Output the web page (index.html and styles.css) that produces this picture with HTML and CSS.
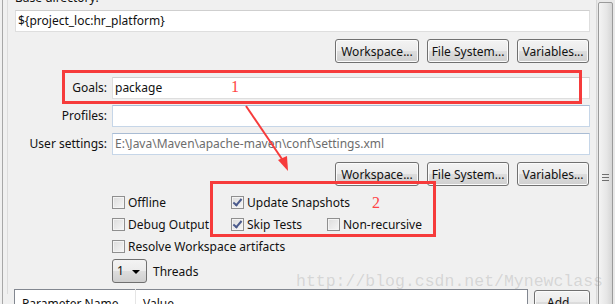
FILE: index.html
```html
<!DOCTYPE html>
<html lang="en">
<head>
  <meta charset="UTF-8" />
  <title>Maven Build Configuration</title>
  <link rel="stylesheet" href="styles.css">
</head>
<body>
  <div class="window">
    <div class="panel">
      <div class="content">
        <div class="base-label">Base directory:</div>
        <div class="field">${project_loc:hr_platform}</div>

        <div class="btn-row">
          <button class="btn btn-ws">Workspace...</button>
          <button class="btn btn-fs">File System...</button>
          <button class="btn btn-var">Variables...</button>
        </div>

        <div class="form">
          <label class="form-label">Goals:</label>
          <div class="field">package</div>
          <label class="form-label">Profiles:</label>
          <div class="field field-blue"></div>
          <label class="form-label">User settings:</label>
          <div class="field field-blue field-muted">E:\Java\Maven\apache-maven\conf\settings.xml</div>
        </div>

        <div class="btn-row">
          <button class="btn btn-ws">Workspace...</button>
          <button class="btn btn-fs">File System...</button>
          <button class="btn btn-var">Variables...</button>
        </div>

        <div class="options">
          <label class="check"><span class="box"></span>Offline</label>
          <label class="check"><span class="box checked"></span>Update Snapshots</label>
          <span></span>
          <label class="check"><span class="box"></span>Debug Output</label>
          <label class="check"><span class="box checked"></span>Skip Tests</label>
          <label class="check"><span class="box"></span>Non-recursive</label>
          <label class="check wide"><span class="box"></span>Resolve Workspace artifacts</label>
        </div>

        <div class="threads">
          <div class="select">1<span class="caret"></span></div>
          <span>Threads</span>
        </div>

        <div class="params">
          <table class="param-table">
            <tr>
              <th class="col-name">Parameter Name</th>
              <th>Value</th>
            </tr>
          </table>
          <button class="btn btn-add">Add...</button>
        </div>
      </div>
    </div>

    <div class="scrollbar">
      <div class="thumb"><span class="grip"></span></div>
    </div>

    <!-- annotations drawn over the dialog -->
    <div class="mark mark-goals"></div>
    <div class="mark mark-flags"></div>
    <span class="note note-1">1</span>
    <span class="note note-2">2</span>
    <svg class="arrow" width="615" height="304" viewBox="0 0 615 304">
      <line x1="246" y1="106" x2="284" y2="162" stroke="#f63b3b" stroke-width="2" />
      <polygon points="288,171 278,160 287,156" fill="#f63b3b" />
    </svg>
    <div class="watermark">http://blog.csdn.net/Mynewclass</div>
  </div>
</body>
</html>
```

FILE: styles.css
```css
body {
  margin: 0;
  background: #f0f0f0;
  font-family: "Noto Sans", sans-serif;
  font-size: 12px;
  color: #111;
}

.window {
  position: relative;
  display: flex;
  width: 615px;
  height: 304px;
  overflow: hidden;
}

.panel {
  width: 593px;
  margin-left: 2px;
  border-left: 1px solid #a7a7a7;
}

.content {
  margin-left: 4px;
  border-left: 1px solid #dcdcdc;
  padding: 0 6px 0 7px;
  height: 100%;
}

.base-label {
  margin-top: -10px;
  height: 16px;
  line-height: 16px;
}

.field {
  box-sizing: border-box;
  height: 22px;
  margin-top: 4px;
  padding: 0 2px;
  line-height: 20px;
  background: #fff;
  border: 1px solid #dedede;
  border-top-color: #cfcfcf;
  white-space: nowrap;
  overflow: hidden;
}

.field-blue {
  border-color: #c6d6e8;
  border-top-color: #a9bcd4;
}

.field-muted {
  color: #6d6d6d;
}

.btn-row {
  display: flex;
  justify-content: flex-end;
  gap: 8px;
  margin-top: 7px;
  padding-right: 1px;
}

.btn {
  box-sizing: border-box;
  height: 24px;
  padding: 0;
  font-family: inherit;
  font-size: 12px;
  color: #111;
  border: 1px solid #707070;
  border-radius: 3px;
  background: linear-gradient(#f3f3f3, #ebebeb 50%, #dddddd 51%, #cfcfcf);
  box-shadow: inset 0 0 0 1px #fbfbfb;
}

.btn-ws {
  width: 84px;
}

.btn-fs {
  width: 82px;
}

.btn-var {
  width: 72px;
}

.form {
  display: grid;
  grid-template-columns: 92px 1fr;
  column-gap: 5px;
  row-gap: 6px;
  margin-top: 14px;
}

.form .field {
  margin-top: 0;
}

.form-label {
  text-align: right;
  line-height: 22px;
}

.options {
  display: grid;
  grid-template-columns: 119px 96px auto;
  grid-auto-rows: 22px;
  margin: 5px 0 0 97px;
}

.check {
  display: flex;
  align-items: center;
  gap: 3px;
  white-space: nowrap;
}

.check.wide {
  grid-column: span 3;
}

.box {
  position: relative;
  flex-shrink: 0;
  box-sizing: border-box;
  width: 13px;
  height: 13px;
  border: 1px solid #8f8f8f;
  background: linear-gradient(135deg, #dcdcdc, #f6f6f6);
  box-shadow: inset 0 0 0 1px #f4f4f4;
}

.box.checked::after {
  content: "";
  position: absolute;
  left: 3px;
  top: 0px;
  width: 3px;
  height: 7px;
  border: solid #4a5a8c;
  border-width: 0 2px 2px 0;
  transform: rotate(40deg);
}

.threads {
  display: flex;
  align-items: center;
  gap: 6px;
  margin: 2px 0 0 97px;
}

.select {
  position: relative;
  box-sizing: border-box;
  width: 35px;
  height: 24px;
  padding-left: 4px;
  line-height: 22px;
  border: 1px solid #707070;
  border-radius: 3px;
  background: linear-gradient(#f3f3f3, #ebebeb 50%, #dddddd 51%, #cfcfcf);
}

.caret {
  position: absolute;
  right: 6px;
  top: 10px;
  border: 4px solid transparent;
  border-top: 4px solid #000;
  border-bottom: 0;
}

.params {
  display: flex;
  gap: 6px;
  margin: 6px 0 0 -1px;
}

.param-table {
  flex: 1;
  height: 40px;
  border: 1px solid #828790;
  border-collapse: collapse;
  background: #fff;
}

.param-table th {
  padding: 5px 7px 0;
  text-align: left;
  font-weight: normal;
  vertical-align: top;
}

.col-name {
  width: 106px;
  border-right: 1px solid #e5e5e5;
}

.btn-add {
  width: 56px;
  margin-top: 1px;
  align-self: flex-start;
  text-align: left;
  padding-left: 12px;
}

.scrollbar {
  width: 18px;
  border-left: 1px solid #d8d8d8;
  background: #e9e9e9;
}

.thumb {
  position: relative;
  box-sizing: border-box;
  width: 15px;
  height: 320px;
  margin: 2px 0 0 1px;
  border: 1px solid #9a9a9a;
  border-radius: 2px;
  background: linear-gradient(to right, #f4f4f4, #e6e6e6 60%, #d6d6d6);
}

.grip {
  position: absolute;
  left: 3px;
  top: 171px;
  width: 7px;
  height: 1px;
  background: #6f6f6f;
  box-shadow: 0 3px 0 #6f6f6f, 0 6px 0 #6f6f6f;
}

.mark {
  position: absolute;
  box-sizing: border-box;
  border: 3px solid #f63b3b;
}

.mark-goals {
  left: 62px;
  top: 70px;
  width: 520px;
  height: 34px;
}

.mark-flags {
  left: 210px;
  top: 181px;
  width: 226px;
  height: 56px;
}

.note {
  position: absolute;
  font-family: "Liberation Serif", serif;
  font-size: 16px;
  color: #f44;
}

.note-1 {
  left: 231px;
  top: 78px;
}

.note-2 {
  left: 372px;
  top: 194px;
}

.arrow {
  position: absolute;
  left: 0;
  top: 0;
}

.watermark {
  position: absolute;
  left: 296px;
  top: 272px;
  font-family: "Liberation Mono", monospace;
  font-size: 16.5px;
  color: rgba(150, 150, 150, 0.3);
  white-space: nowrap;
}
```
